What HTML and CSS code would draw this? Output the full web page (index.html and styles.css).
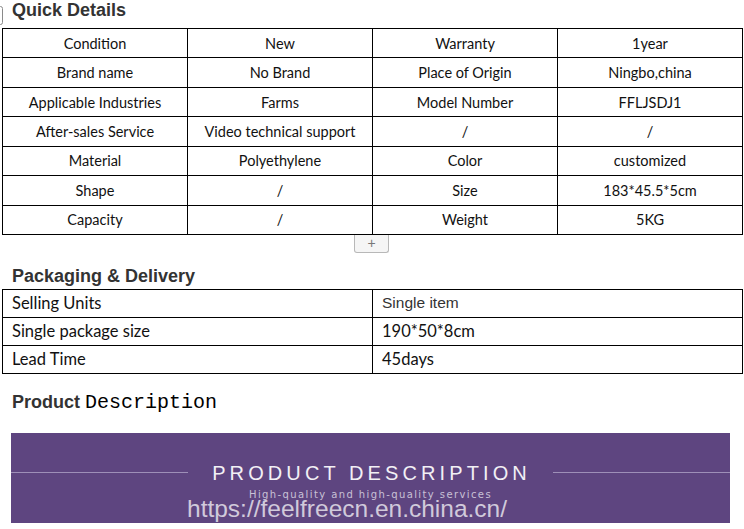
FILE: index.html
```html
<!DOCTYPE html>
<html lang="en">
<head>
<meta charset="utf-8">
<title>Product details</title>
<link rel="stylesheet" href="styles.css">
</head>
<body>
<div class="page">
  <span class="edge-mark"></span>
  <h2 class="section-title">Quick Details</h2>
  <table class="specs">
    <tr><td>Condition</td><td>New</td><td>Warranty</td><td>1year</td></tr>
    <tr><td>Brand name</td><td>No Brand</td><td>Place of Origin</td><td>Ningbo,china</td></tr>
    <tr><td>Applicable Industries</td><td>Farms</td><td>Model Number</td><td>FFLJSDJ1</td></tr>
    <tr><td>After-sales Service</td><td>Video technical support</td><td>/</td><td>/</td></tr>
    <tr><td>Material</td><td>Polyethylene</td><td>Color</td><td>customized</td></tr>
    <tr><td>Shape</td><td>/</td><td>Size</td><td>183*45.5*5cm</td></tr>
    <tr><td>Capacity</td><td>/</td><td>Weight</td><td>5KG</td></tr>
  </table>
  <div class="add-row"><span class="add-btn">+</span></div>

  <h2 class="section-title pack-title">Packaging &amp; Delivery</h2>
  <table class="pack">
    <tr><td>Selling Units</td><td class="arial">Single item</td></tr>
    <tr><td>Single package size</td><td>190*50*8cm</td></tr>
    <tr><td>Lead Time</td><td>45days</td></tr>
  </table>

  <h2 class="section-title desc-title">Product <span class="serif">Description</span></h2>

  <div class="banner">
    <div class="banner-row">
      <span class="banner-line"></span>
      <span class="banner-title">PRODUCT DESCRIPTION</span>
      <span class="banner-line"></span>
    </div>
    <div class="banner-sub">High-quality and high-quality services</div>
    <div class="watermark">https://feelfreecn.en.china.cn/</div>
  </div>
</div>
</body>
</html>
```
FILE: styles.css
```css
* { box-sizing: border-box; }
html, body { margin: 0; padding: 0; background: #fff; }
body { width: 744px; height: 529px; overflow: hidden; }

.page { position: relative; padding: 0 2px; }

.edge-mark {
  position: absolute;
  left: -2px;
  top: 6px;
  width: 5px;
  height: 19px;
  border: 1px solid #8a8a8a;
  border-radius: 3px;
}

.section-title {
  margin: 0 0 0 10px;
  font-family: "Liberation Sans", Arial, sans-serif;
  font-weight: bold;
  font-size: 18px;
  line-height: 20px;
  color: #333;
}

.specs {
  margin-top: 8px;
  width: 741px;
  border-collapse: collapse;
  table-layout: fixed;
  font-family: Lato, "Open Sans", sans-serif;
  font-size: 14.5px;
  color: #111;
}
.specs tr { height: 29.43px; }
.specs td {
  border: 1px solid #000;
  padding: 0;
  text-align: center;
  vertical-align: middle;
}

.add-row { display: flex; justify-content: center; padding-right: 1px; }
.add-btn {
  width: 35px;
  height: 18px;
  border: 1px solid #b8b8b8;
  border-top: none;
  border-radius: 0 0 3px 3px;
  background: #f5f5f5;
  color: #777;
  font-family: "Liberation Sans", Arial, sans-serif;
  font-size: 14px;
  line-height: 16px;
  text-align: center;
}

.pack-title { margin-top: 13px; }

.pack {
  margin-top: 3px;
  width: 741px;
  border-collapse: collapse;
  table-layout: fixed;
  font-family: Lato, "Open Sans", sans-serif;
  font-size: 16.5px;
  color: #111;
}
.pack tr { height: 28px; }
.pack td {
  border: 1px solid #000;
  padding: 0 9px;
  vertical-align: middle;
}
.pack td.arial {
  font-family: "Liberation Sans", Arial, sans-serif;
  font-size: 15.5px;
  color: #333;
}

.desc-title { margin-top: 16px; line-height: 24px; }
.serif {
  font-family: "Liberation Mono", "DejaVu Sans Mono", monospace;
  font-weight: normal;
  font-size: 20px;
  color: #000;
}

.banner {
  position: relative;
  margin: 18px 0 0 9px;
  width: 719px;
  height: 90px;
  background: #5e4580;
  padding-top: 28px;
}
.banner-row { display: flex; align-items: center; }
.banner-line { flex: 1; height: 1px; background: #9e8fb8; }
.banner-title {
  margin: 0 22px 0 24px;
  font-family: "Liberation Sans", Arial, sans-serif;
  font-size: 20px;
  line-height: 24px;
  letter-spacing: 4.1px;
  color: #f2f0f5;
}
.banner-sub {
  margin-top: 3px;
  text-align: center;
  font-family: "DejaVu Sans", sans-serif;
  font-size: 10px;
  line-height: 14px;
  letter-spacing: 1.4px;
  color: #c9c1d6;
}
.watermark {
  position: absolute;
  left: 176px;
  top: 62px;
  font-family: "Liberation Sans", Arial, sans-serif;
  font-size: 24.5px;
  line-height: 28px;
  color: rgba(255, 255, 255, 0.72);
  white-space: nowrap;
}
```
